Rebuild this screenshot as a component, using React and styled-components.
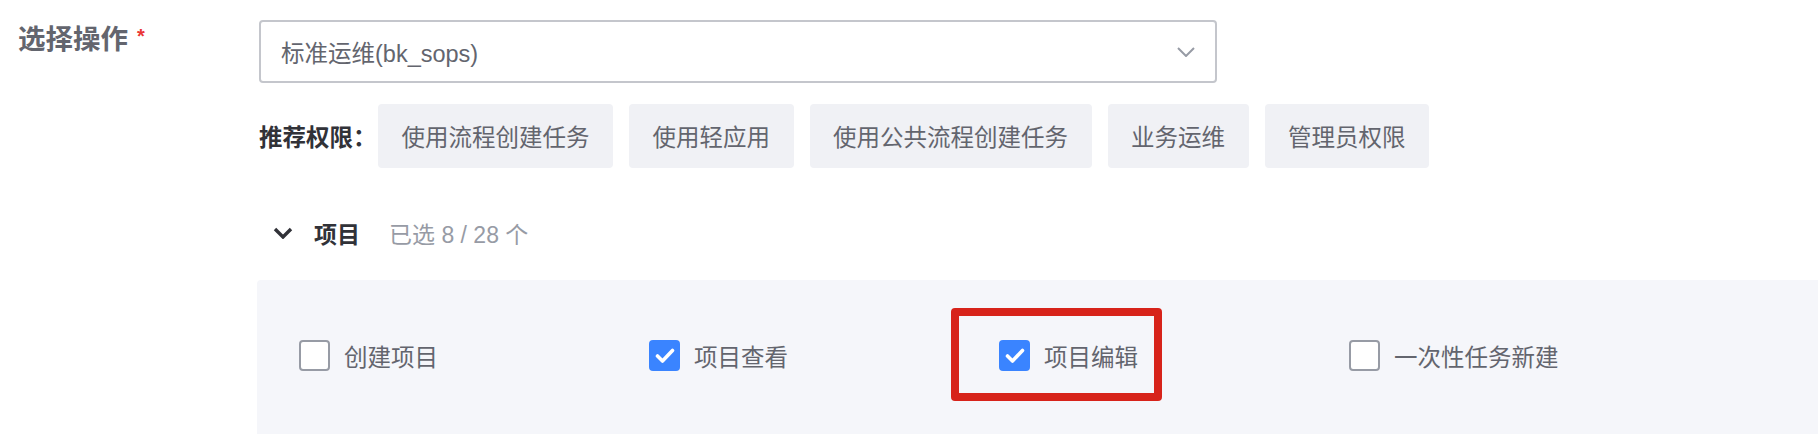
import React from "react";
import styled, { createGlobalStyle } from "styled-components";

const GlobalStyle = createGlobalStyle`
  html, body {
    margin: 0;
    padding: 0;
    background: #fff;
    overflow: hidden;
  }
  body {
    font-family: "Liberation Sans", "Noto Sans CJK SC", sans-serif;
  }
`;

const Page = styled.div`
  width: 1818px;
  height: 434px;
  padding: 20px 0 0 18px;
  box-sizing: border-box;
  display: flex;
  align-items: stretch;
  overflow: hidden;
`;

const FormLabel = styled.div`
  width: 241px;
  flex-shrink: 0;
  align-self: flex-start;
  font-size: 27.5px;
  font-weight: 700;
  line-height: 40px;
  color: #63656e;
  display: flex;
  align-items: flex-start;
`;

const Required = styled.span`
  color: #ea3636;
  font-size: 20px;
  line-height: 20px;
  margin-left: 9px;
  margin-top: 6px;
`;

const FormContent = styled.div`
  flex: 1;
  display: flex;
  flex-direction: column;
  min-width: 0;
`;

const Select = styled.div`
  width: 958px;
  height: 63px;
  box-sizing: border-box;
  border: 2px solid #c4c6cc;
  border-radius: 4px;
  padding: 0 20px;
  display: flex;
  align-items: center;
  justify-content: space-between;
  font-size: 23.5px;
  color: #63656e;
  background: #fff;
  flex-shrink: 0;
`;

const RecommendRow = styled.div`
  display: flex;
  align-items: center;
  margin-top: 21px;
  gap: 16px;
  flex-shrink: 0;
`;

const RecommendLabel = styled.span`
  font-size: 23.5px;
  font-weight: 700;
  color: #313238;
  width: 103px;
  white-space: nowrap;
`;

const Tag = styled.div`
  height: 64px;
  padding: 0 23.5px;
  display: flex;
  align-items: center;
  background: #f0f1f5;
  border-radius: 4px;
  font-size: 23.5px;
  color: #63656e;
  white-space: nowrap;
`;

const GroupHeader = styled.div`
  display: flex;
  align-items: center;
  height: 40px;
  margin-top: 45px;
  padding-left: 14px;
  flex-shrink: 0;
`;

const GroupTitle = styled.span`
  font-size: 23px;
  font-weight: 700;
  color: #313238;
  margin-left: 21px;
`;

const GroupCount = styled.span`
  font-size: 23px;
  color: #979ba5;
  margin-left: 29px;
`;

const Panel = styled.div`
  flex: 1;
  margin-top: 27px;
  margin-left: -2px;
  background: #f5f6fa;
  border-radius: 4px 0 0 0;
  padding: 60px 0 0 42px;
  box-sizing: border-box;
  display: flex;
  align-items: flex-start;
`;

const Item = styled.div`
  position: relative;
  width: 350px;
  flex-shrink: 0;
  display: flex;
  align-items: center;
  height: 31px;
`;

const Box = styled.span`
  width: 31px;
  height: 31px;
  box-sizing: border-box;
  border-radius: 4px;
  flex-shrink: 0;
  display: flex;
  align-items: center;
  justify-content: center;
  background: ${(p) => (p.$checked ? "#3a84ff" : "#fff")};
  border: ${(p) => (p.$checked ? "none" : "2px solid #979ba5")};
`;

const ItemText = styled.span`
  margin-left: 14px;
  font-size: 23.5px;
  color: #63656e;
  white-space: nowrap;
`;

const Highlight = styled.div`
  position: absolute;
  left: -48px;
  top: -32px;
  width: 211px;
  height: 93px;
  box-sizing: border-box;
  border: 8px solid #d7231a;
  border-radius: 4px;
  pointer-events: none;
`;

const tags = [
  "使用流程创建任务",
  "使用轻应用",
  "使用公共流程创建任务",
  "业务运维",
  "管理员权限",
];

const actions = [
  { name: "创建项目", checked: false },
  { name: "项目查看", checked: true },
  { name: "项目编辑", checked: true, marked: true },
  { name: "一次性任务新建", checked: false },
];

const Checkbox = ({ checked }) => (
  <Box $checked={checked}>
    {checked && (
      <svg width="20" height="16" viewBox="0 0 20 16">
        <polyline
          points="2.5,8 7.5,13 17.5,2.5"
          fill="none"
          stroke="#fff"
          strokeWidth="3.6"
          strokeLinecap="round"
          strokeLinejoin="round"
        />
      </svg>
    )}
  </Box>
);

const App = () => {
  return (
    <>
      <GlobalStyle />
      <Page>
        <FormLabel>
          选择操作
          <Required>*</Required>
        </FormLabel>
        <FormContent>
          <Select>
            <span>标准运维(bk_sops)</span>
            <svg width="18" height="10" viewBox="0 0 18 10">
              <polyline
                points="1,1 9,9 17,1"
                fill="none"
                stroke="#979ba5"
                strokeWidth="2"
              />
            </svg>
          </Select>
          <RecommendRow>
            <RecommendLabel>推荐权限：</RecommendLabel>
            {tags.map((t) => (
              <Tag key={t}>{t}</Tag>
            ))}
          </RecommendRow>
          <GroupHeader>
            <svg width="20" height="12" viewBox="0 0 20 12">
              <polyline
                points="2,2 10,10 18,2"
                fill="none"
                stroke="#313238"
                strokeWidth="3.4"
              />
            </svg>
            <GroupTitle>项目</GroupTitle>
            <GroupCount>已选 8 / 28 个</GroupCount>
          </GroupHeader>
          <Panel>
            {actions.map((a) => (
              <Item key={a.name}>
                <Checkbox checked={a.checked} />
                <ItemText>{a.name}</ItemText>
                {a.marked && <Highlight />}
              </Item>
            ))}
          </Panel>
        </FormContent>
      </Page>
    </>
  );
};

export default App;
